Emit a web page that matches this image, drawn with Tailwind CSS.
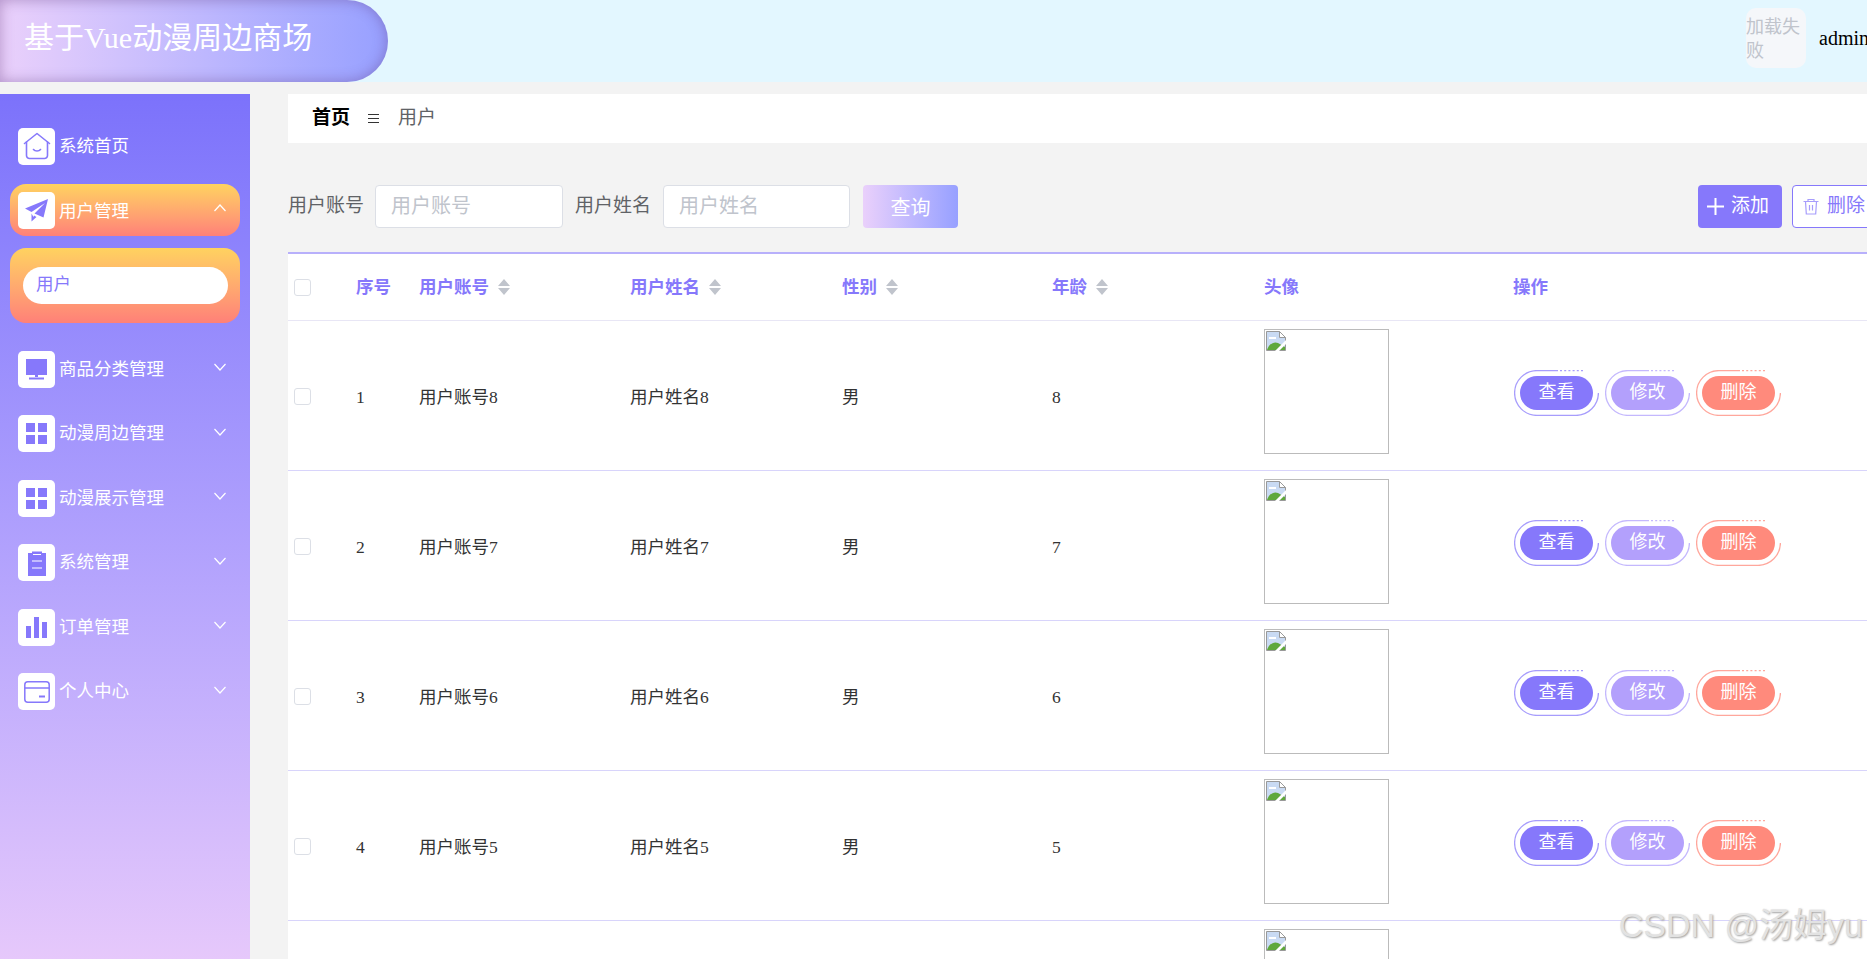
<!DOCTYPE html>
<html lang="en">
<head>
    <meta charset="UTF-8">
    <meta name="viewport" content="width=device-width, initial-scale=1.0">
    <title>基于Vue动漫周边商场</title>
    <script src="https://cdn.jsdelivr.net/npm/@tailwindcss/browser@4"></script>
</head>
<body class="bg-[#f3f3f3] font-['Liberation_Serif','Noto_Sans_CJK_SC',serif] text-[17.5px]">
<div class="relative h-[959px] overflow-hidden">

    <!-- Header -->
    <header class="h-[82px] w-[1900px] bg-[#e3f7ff] flex items-center">
        <div class="w-[388px] h-[82px] rounded-r-[42px] bg-gradient-to-r from-[#ead0fb] to-[#97a0ff] shadow-[inset_0_0_14px_rgba(90,50,120,0.4)] pl-[24px] flex items-center">
            <span class="text-[30px] text-white leading-none pb-[6px]">基于Vue动漫周边商场</span>
        </div>
        <div class="ml-[1358px] self-start mt-[8px] w-[60px] h-[60px] rounded-[10px] bg-[#f5f7fa] text-[18px] text-[#c0c4cc] leading-[24px] pt-[7px]">加载失败</div>
        <span class="ml-[13px] text-[20px] text-black pb-[6px]">admin</span>
    </header>

    <div class="flex mt-[12px] w-[1900px]">
        <!-- Sidebar -->
        <aside class="w-[250px] h-[865px] shrink-0 bg-gradient-to-b from-[#7c72fb] to-[#e6c8fb] pt-[26px] px-[10px] text-white">
            <a class="h-[52px] mb-[12px] flex items-center pl-[8px] gap-[4px]">
                <span class="w-[37px] h-[37px] rounded-[5px] bg-white flex items-center justify-center">
                    <svg class="w-[28px] h-[28px]" viewBox="0 0 28 28" fill="none" stroke="#8678fb" stroke-width="1.6" stroke-linejoin="round" stroke-linecap="round"><path d="M1.5 11.5 14 1.5l12.500 10"/><path d="M3.500 10v13.500a3 3 0 0 0 3 3h15a3 3 0 0 0 3-3V10"/><path d="M10.500 17.500c1.500 2 5.500 2 7 0"/></svg>
                </span>
                <span>系统首页</span>
            </a>

            <a class="h-[52px] mb-[12px] flex items-center pl-[8px] gap-[4px] rounded-[16px] bg-gradient-to-b from-[#ffd25f] to-[#ff8078]">
                <span class="w-[37px] h-[37px] rounded-[5px] bg-white flex items-center justify-center">
                    <svg class="w-[24px] h-[24px]" viewBox="0 0 24 24" fill="#8678fb"><path d="M23 1 0 10.500l6.500 3.500L20 5 9.500 15.500 18.500 19.500z"/><path d="M6.500 15.500v8l5-4.500-2.500-1.500-.5 1.500z"/></svg>
                </span>
                <span class="pt-[2px]">用户管理</span>
                <svg class="ml-auto mr-[14px] mb-[4px] w-[12px] h-[8px]" viewBox="0 0 12 8" fill="none" stroke="#fff" stroke-width="1.200"><path d="M.5 7 6 1l5.500 6"/></svg>
            </a>

            <div class="h-[75px] mb-[20px] rounded-[16px] bg-gradient-to-b from-[#ffd25f] to-[#ff8078] pt-[19px] pl-[13px]">
                <div class="w-[205px] h-[37px] rounded-full bg-white text-[#8678fb] pl-[13px] leading-[35px]">用户</div>
            </div>

            <a class="h-[52px] mb-[12.5px] flex items-center pl-[8px] gap-[4px]">
                <span class="w-[37px] h-[37px] rounded-[5px] bg-white flex items-center justify-center">
                    <svg class="w-[21px] h-[21px]" viewBox="0 0 21 21" fill="#8678fb"><rect width="21" height="16"/><rect x="9" y="16" width="3" height="2"/><rect x="3" y="18.500" width="15" height="2"/></svg>
                </span>
                <span>商品分类管理</span>
                <svg class="ml-auto mr-[14px] mb-[4px] w-[12px] h-[8px]" viewBox="0 0 12 8" fill="none" stroke="#fff" stroke-width="1.200"><path d="M.5 1 6 7l5.500-6"/></svg>
            </a>
            <a class="h-[52px] mb-[12.5px] flex items-center pl-[8px] gap-[4px]">
                <span class="w-[37px] h-[37px] rounded-[5px] bg-white flex items-center justify-center">
                    <svg class="w-[21px] h-[21px]" viewBox="0 0 21 21" fill="#8678fb"><rect width="9" height="9"/><rect x="12" width="9" height="9"/><rect y="12" width="9" height="9"/><rect x="12" y="12" width="9" height="9"/></svg>
                </span>
                <span>动漫周边管理</span>
                <svg class="ml-auto mr-[14px] mb-[4px] w-[12px] h-[8px]" viewBox="0 0 12 8" fill="none" stroke="#fff" stroke-width="1.200"><path d="M.5 1 6 7l5.500-6"/></svg>
            </a>
            <a class="h-[52px] mb-[12.5px] flex items-center pl-[8px] gap-[4px]">
                <span class="w-[37px] h-[37px] rounded-[5px] bg-white flex items-center justify-center">
                    <svg class="w-[21px] h-[21px]" viewBox="0 0 21 21" fill="#8678fb"><rect width="9" height="9"/><rect x="12" width="9" height="9"/><rect y="12" width="9" height="9"/><rect x="12" y="12" width="9" height="9"/></svg>
                </span>
                <span>动漫展示管理</span>
                <svg class="ml-auto mr-[14px] mb-[4px] w-[12px] h-[8px]" viewBox="0 0 12 8" fill="none" stroke="#fff" stroke-width="1.200"><path d="M.5 1 6 7l5.500-6"/></svg>
            </a>
            <a class="h-[52px] mb-[12.5px] flex items-center pl-[8px] gap-[4px]">
                <span class="w-[37px] h-[37px] rounded-[5px] bg-white flex items-center justify-center">
                    <svg class="w-[20px] h-[26px]" viewBox="0 0 20 26" fill="#8678fb"><path d="M1 3h4V1.500h10V3h4v23H1z"/><path d="M5 11h10M5 18h10" stroke="#fff" stroke-width="1.200"/><path d="M6 4.500h8" stroke="#fff" stroke-width="1"/></svg>
                </span>
                <span>系统管理</span>
                <svg class="ml-auto mr-[14px] mb-[4px] w-[12px] h-[8px]" viewBox="0 0 12 8" fill="none" stroke="#fff" stroke-width="1.200"><path d="M.5 1 6 7l5.500-6"/></svg>
            </a>
            <a class="h-[52px] mb-[12.5px] flex items-center pl-[8px] gap-[4px]">
                <span class="w-[37px] h-[37px] rounded-[5px] bg-white flex items-center justify-center">
                    <svg class="w-[21px] h-[21px]" viewBox="0 0 21 21" fill="#8678fb"><rect y="9" width="5" height="12"/><rect x="8" width="5" height="21"/><rect x="16" y="5" width="5" height="16"/></svg>
                </span>
                <span>订单管理</span>
                <svg class="ml-auto mr-[14px] mb-[4px] w-[12px] h-[8px]" viewBox="0 0 12 8" fill="none" stroke="#fff" stroke-width="1.200"><path d="M.5 1 6 7l5.500-6"/></svg>
            </a>
            <a class="h-[52px] flex items-center pl-[8px] gap-[4px]">
                <span class="w-[37px] h-[37px] rounded-[5px] bg-white flex items-center justify-center">
                    <svg class="w-[26px] h-[22px]" viewBox="0 0 26 22" fill="none" stroke="#8678fb" stroke-width="1.500"><rect x=".8" y=".8" width="24.400" height="20.400" rx="3"/><path d="M1 7h24"/><path d="M15 15.500h6" stroke-width="2"/></svg>
                </span>
                <span>个人中心</span>
                <svg class="ml-auto mr-[14px] mb-[4px] w-[12px] h-[8px]" viewBox="0 0 12 8" fill="none" stroke="#fff" stroke-width="1.200"><path d="M.5 1 6 7l5.500-6"/></svg>
            </a>
        </aside>

        <!-- Main -->
        <main class="ml-[38px] w-[1588px] shrink-0">
            <div class="h-[49px] w-[1600px] bg-white flex items-center pl-[24px] text-[19px]">
                <b class="text-black">首页</b>
                <svg class="ml-[18px] w-[11px] h-[9px]" viewBox="0 0 11 9" stroke="#333" stroke-width="1"><path d="M0 .5h11M0 4.500h11M0 8.500h11"/></svg>
                <span class="ml-[19px] text-[#606266]">用户</span>
            </div>

            <!-- Filter bar -->
            <div class="mt-[42px] h-[43px] flex items-center">
                <label class="text-[19px] text-[#606266] mr-[11px]">用户账号</label>
                <input placeholder="用户账号" class="w-[188px] h-[43px] rounded-[4px] bg-white border border-[#dcdfe6] px-[15px] text-[20px] placeholder-[#c0c4cc] outline-none">
                <label class="ml-[12px] text-[19px] text-[#606266] mr-[12px]">用户姓名</label>
                <input placeholder="用户姓名" class="w-[187px] h-[43px] rounded-[4px] bg-white border border-[#dcdfe6] px-[15px] text-[20px] placeholder-[#c0c4cc] outline-none">
                <button class="ml-[13px] w-[95px] h-[43px] pt-[2px] rounded-[4px] bg-gradient-to-r from-[#ead0fb] to-[#97a0ff] text-white text-[20px]">查询</button>
                <button class="ml-auto w-[84px] h-[43px] rounded-[4px] bg-[#8678fb] text-white text-[19px] flex items-center pl-[9px] gap-[7px]">
                    <svg class="w-[17px] h-[17px]" viewBox="0 0 17 17" stroke="#fff" stroke-width="2"><path d="M8.500 0v17M0 8.500h17"/></svg>
                    <span>添加</span>
                </button>
                <button class="ml-[10px] w-[84px] h-[43px] rounded-[4px] bg-white border border-[#8678fb] text-[#8678fb] text-[19px] flex items-center pl-[10px] gap-[8px]">
                    <svg class="w-[16px] h-[17px]" viewBox="0 0 16 17" fill="none" stroke="#a79dfc" stroke-width="1.200"><path d="M.5 3.500h15M5 3.500V1.500h6v2M2.500 3.500l.8 12.500h9.400l.8-12.500M6.500 7v5.500M9.500 7v5.500"/></svg>
                    <span>删除</span>
                </button>
            </div>

            <!-- Table -->
            <div class="mt-[24px] bg-white border-t-2 border-[#b8b0fb]">
                <div class="grid grid-cols-[68px_63px_211px_212px_210px_212px_249px_1fr] h-[67px] items-center border-b border-[#e8e6f5] font-bold text-[#8678fb]">
                    <span class="pl-[6px]"><i class="block w-[17px] h-[17px] rounded-[3px] border border-[#dcdfe6] bg-white"></i></span>
                    <span>序号</span>
                    <span class="flex items-center gap-[9px]">用户账号<svg class="w-[12px] h-[16px]" viewBox="0 0 12 16" fill="#c0c4cc"><path d="M6 0l6 7H0zM6 16l6-7H0z"/></svg></span>
                    <span class="flex items-center gap-[9px]">用户姓名<svg class="w-[12px] h-[16px]" viewBox="0 0 12 16" fill="#c0c4cc"><path d="M6 0l6 7H0zM6 16l6-7H0z"/></svg></span>
                    <span class="flex items-center gap-[9px]">性别<svg class="w-[12px] h-[16px]" viewBox="0 0 12 16" fill="#c0c4cc"><path d="M6 0l6 7H0zM6 16l6-7H0z"/></svg></span>
                    <span class="flex items-center gap-[9px]">年龄<svg class="w-[12px] h-[16px]" viewBox="0 0 12 16" fill="#c0c4cc"><path d="M6 0l6 7H0zM6 16l6-7H0z"/></svg></span>
                    <span>头像</span>
                    <span>操作</span>
                </div>
                <div id="rows"></div>
            </div>
        </main>
    </div>

    <!-- Watermark -->
    <div class="absolute right-[4px] bottom-[17px] text-[34px] leading-none text-[#e2e2e2] [text-shadow:1px_1px_2px_#a0a0a0] font-['Liberation_Sans','Noto_Sans_CJK_SC',sans-serif]">CSDN @汤姆yu</div>
</div>

    <script>
        const brokenImage = `<span class="block w-[125px] h-[125px] border border-[#bbb] pl-[1px] pt-[1px]">
            <svg class="w-[20px] h-[20px]" viewBox="0 0 20 20">
                <path d="M.5.5h13l6 6v13H.5z" fill="#c9daf3" stroke="#999"/>
                <path d="M13.500.5v6h6z" fill="#fff" stroke="#999"/>
                <path d="M1 19c2-6 7-9 11-7l7 4v3z" fill="#5fa83c"/>
                <path d="M3 6h7v2H3z" fill="#fff"/>
                <path d="M9 20 20 9v4l-7 7z" fill="#fff"/>
            </svg>
        </span>`;

        // Row action button with its broken ring outline
        function actionButton(label, bg, ring) {
            return `<span class="relative w-[85px] h-[46px] flex items-center justify-center shrink-0">
                <svg class="absolute inset-0 w-[85px] h-[46px]" viewBox="0 0 85 46" fill="none" stroke="${ring}" stroke-width="1.300">
                    <path d="M84.400 23A22.500 22.500 0 0 1 62 45.400H23A22.400 22.400 0 0 1 23 .6H44"/>
                    <path d="M46 .6H71" stroke-dasharray="2 2.200"/>
                </svg>
                <span class="w-[73px] h-[34px] rounded-full text-[18px] text-white text-center leading-[33px] ${bg}">${label}</span>
            </span>`;
        }

        const rows = [[1, 8], [2, 7], [3, 6], [4, 5]];
        document.getElementById("rows").innerHTML = rows.map(([no, v]) => `
            <div class="grid grid-cols-[68px_63px_211px_212px_210px_212px_249px_1fr] h-[150px] items-center border-b border-[#d8d4fb] text-[#333]">
                <span class="pl-[6px] pt-[2px]"><i class="block w-[17px] h-[17px] rounded-[3px] border border-[#dcdfe6] bg-white"></i></span>
                <span class="pt-[3px]">${no}</span>
                <span class="pt-[3px]">用户账号${v}</span>
                <span class="pt-[3px]">用户姓名${v}</span>
                <span class="pt-[3px]">男</span>
                <span class="pt-[3px]">${v}</span>
                <span class="self-start pt-[8px]">${brokenImage}</span>
                <span class="flex gap-[6px] pb-[5px] pl-[1px]">
                    ${actionButton("查看", "bg-[#8678fb]", "#a79dfc")}
                    ${actionButton("修改", "bg-[#b3a0fc]", "#c4b8fd")}
                    ${actionButton("删除", "bg-[#ff8a7c]", "#ffa79c")}
                </span>
            </div>`).join("") + `
            <div class="h-[38px] pl-[976px] pt-[8px]">${brokenImage}</div>`;
    </script>
</body>
</html>
